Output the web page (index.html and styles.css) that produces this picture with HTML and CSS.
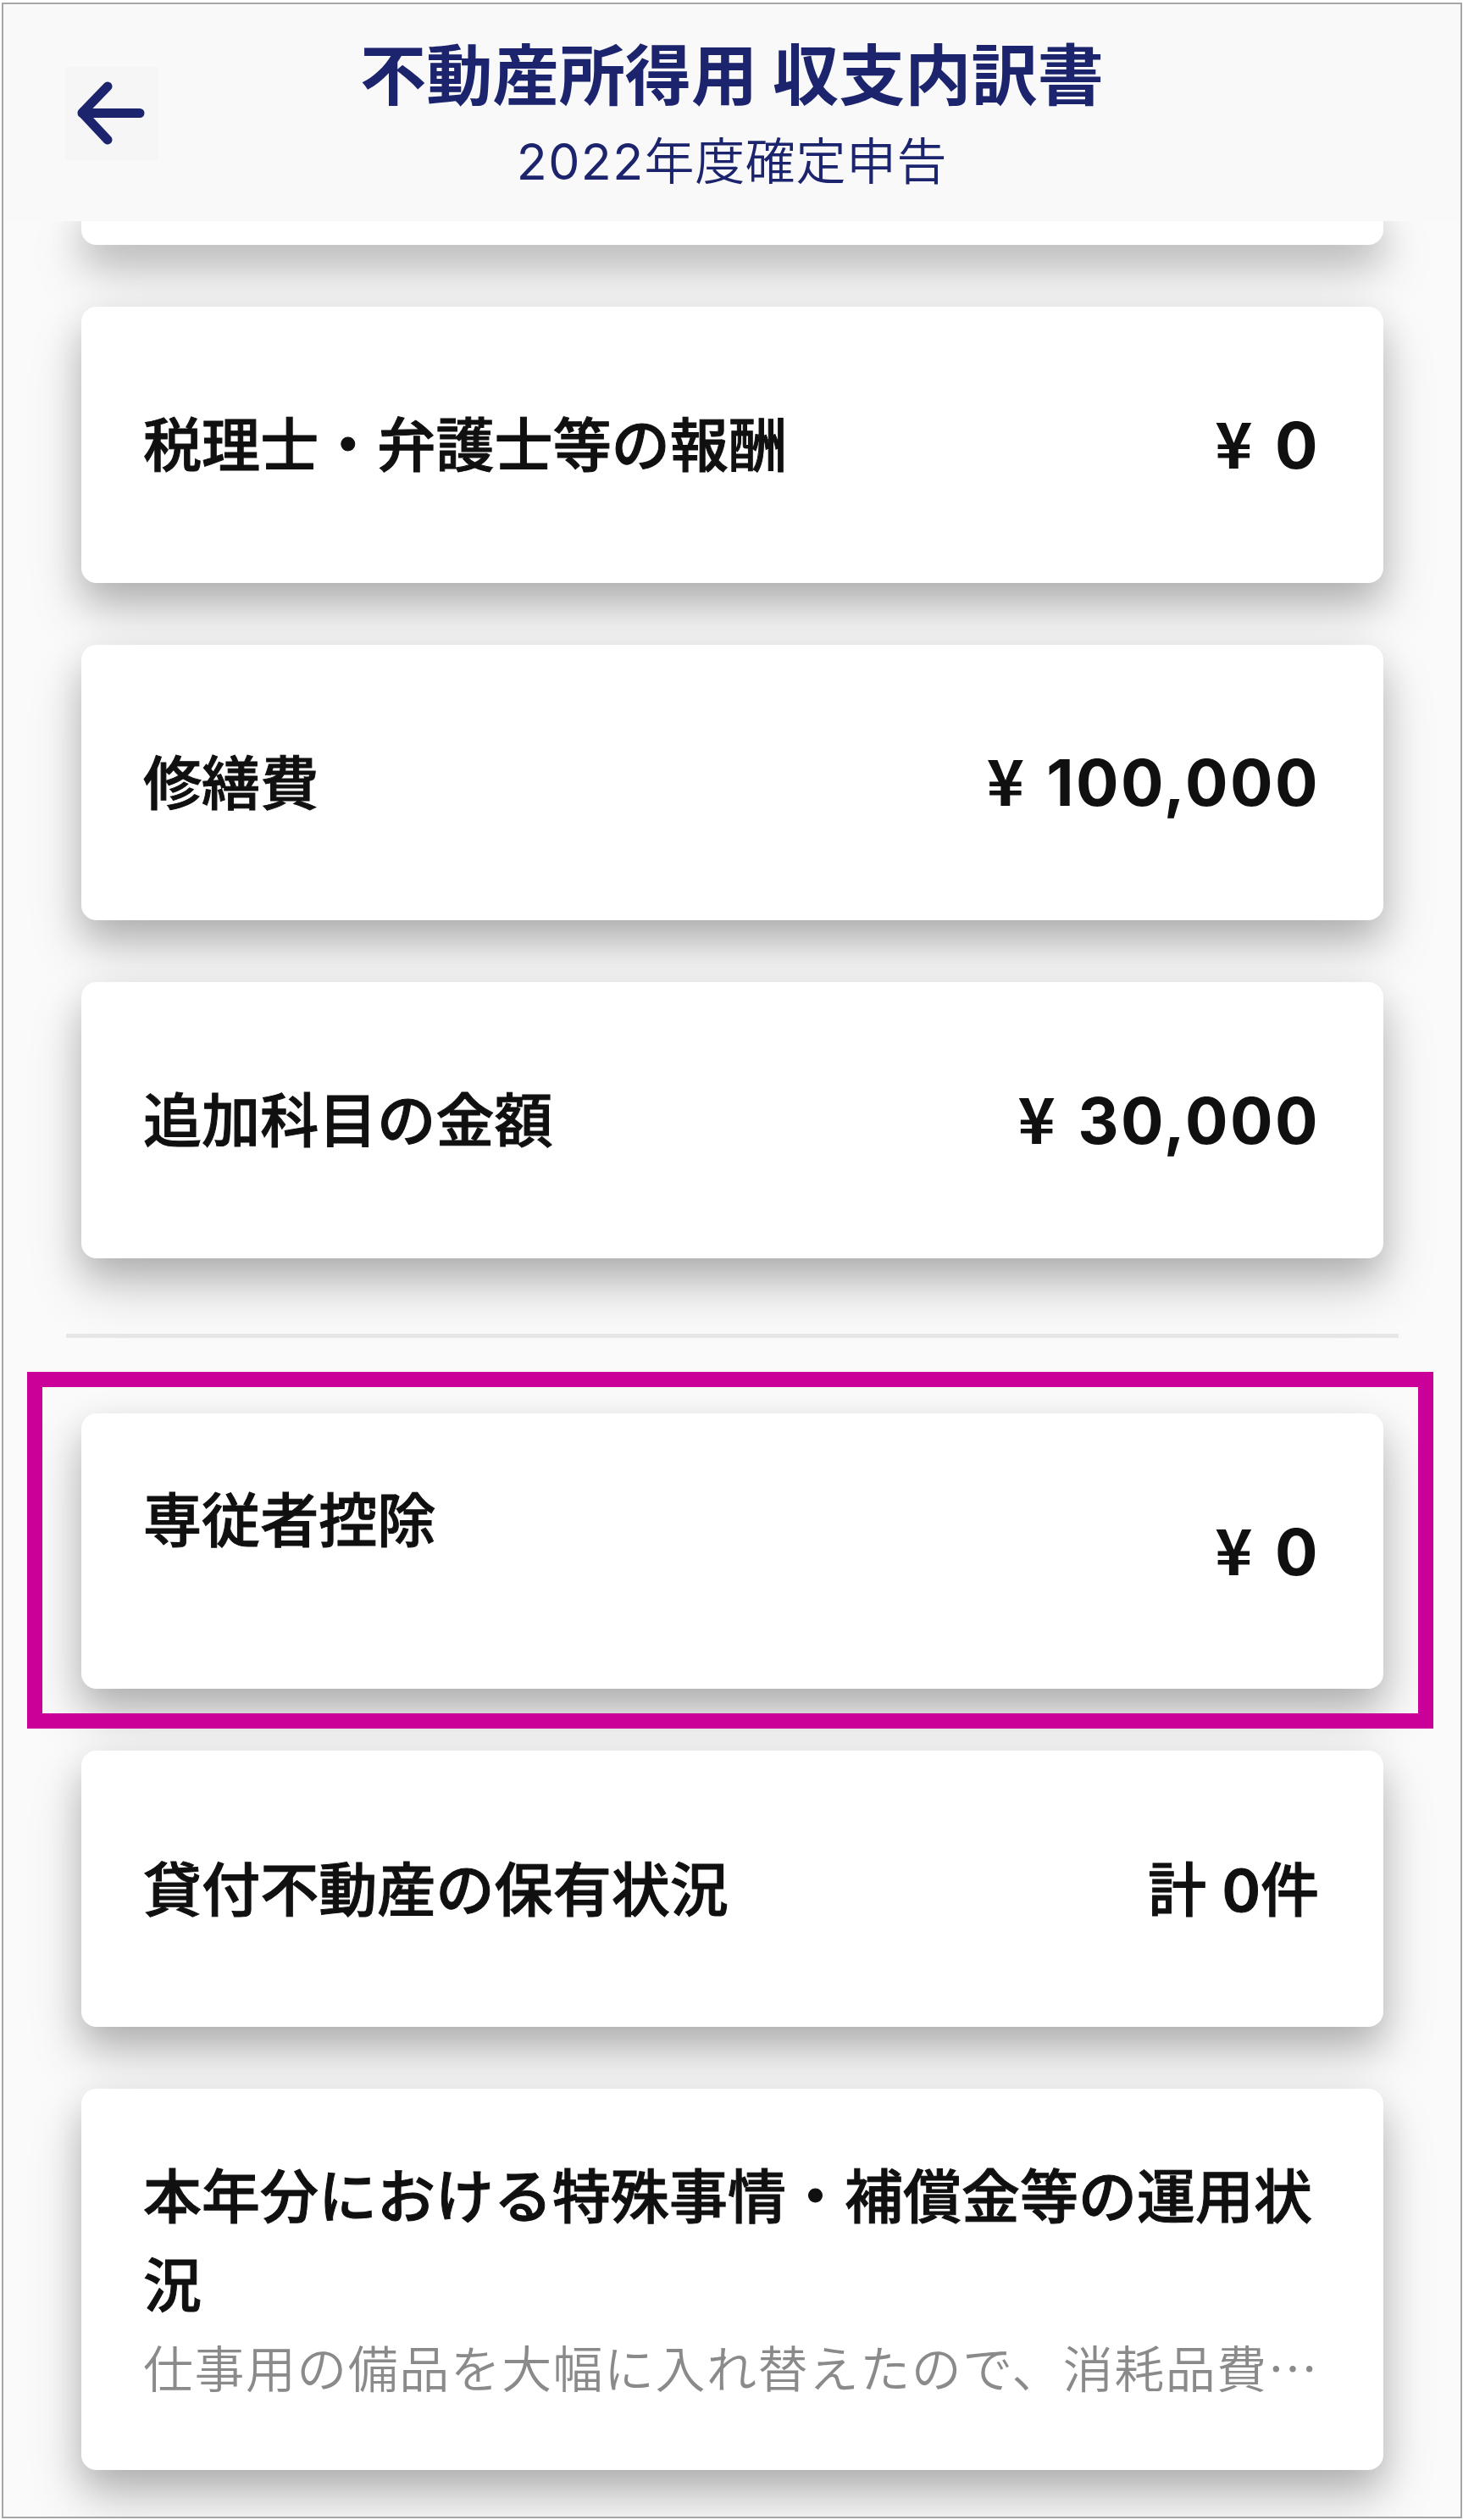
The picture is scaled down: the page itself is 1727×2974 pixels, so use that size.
FILE: index.html
```html
<!DOCTYPE html>
<html lang="ja">
<head>
<meta charset="utf-8">
<title>不動産所得用 収支内訳書</title>
<link rel="stylesheet" href="styles.css">
</head>
<body>
<div class="screen">
  <header class="header">
    <button class="back" aria-label="戻る">
      <svg class="back-icon" viewBox="0 0 110 110"><path d="M50 23 L20 54 L50 86 M20 54.500 H88" /></svg>
    </button>
    <div class="heading">
      <h1 class="title">不動産所得用 収支内訳書</h1>
      <p class="subtitle"><span class="year">2022</span>年度確定申告</p>
    </div>
  </header>
  <main class="list">
    <section class="card card-cut"></section>
    <section class="card"><h2 class="label">税理士・弁護士等の報酬</h2><p class="amount"><span class="yen">¥</span>0</p></section>
    <section class="card"><h2 class="label">修繕費</h2><p class="amount"><span class="yen">¥</span>100,000</p></section>
    <section class="card"><h2 class="label">追加科目の金額</h2><p class="amount"><span class="yen">¥</span>30,000</p></section>
    <hr class="divider">
    <section class="card card-marked"><h2 class="label label-raised">専従者控除</h2><p class="amount"><span class="yen">¥</span>0</p><div class="marker"></div></section>
    <section class="card"><h2 class="label">貸付不動産の保有状況</h2><p class="count">計 <span class="digit">0</span>件</p></section>
    <section class="card card-note"><h2 class="label label-wrap">本年分における特殊事情・補償金等の運用状況</h2><p class="note">仕事用の備品を大幅に入れ替えたので、消耗品費<span class="dots">…</span></p></section>
  </main>
</div>
</body>
</html>
```
FILE: styles.css
```css
* { box-sizing: border-box; margin: 0; padding: 0; }
body { background: #fff; font-family: "Noto Sans CJK JP", sans-serif; color: #101010; }
.screen { width: 1724px; height: 2969px; margin: 3px 0 0 2px; border: 2px solid #a5a6a8; background: #fafafa; overflow: hidden; }
.header { position: relative; z-index: 2; display: flex; height: 256px; padding: 74px 73px 0; background: #f9f9f9; }
.back { flex: none; width: 110px; height: 110px; border: 0; background: #f6f6f6; }
.back-icon { display: block; width: 110px; height: 110px; fill: none; stroke: #1b246d; stroke-width: 11; stroke-linecap: round; stroke-linejoin: round; }
.heading { flex: 1; margin: -51px 110px 0 0; text-align: center; color: #1b246d; white-space: nowrap; }
.title { font-size: 78.200px; line-height: 112px; font-weight: 700; }
.subtitle { font-size: 59px; line-height: 94px; font-weight: 350; letter-spacing: .6px; }
.year { font-family: Inter, sans-serif; font-weight: 400; letter-spacing: 1.400px; }
.list { display: flex; flex-direction: column; gap: 73px; padding: 0 91px 0 92px; }
.card { position: relative; display: flex; align-items: center; justify-content: space-between; flex: none; height: 325.600px; padding: 0 76px 0 73px; border-radius: 18px; background: #fff; box-shadow: 0 34px 64px rgba(0,0,0,.18), 0 18px 40px rgba(0,0,0,.16); }
.card-cut { height: 50px; margin-top: -22px; }
.label { padding-bottom: 6px; font-size: 69.100px; line-height: 105px; font-weight: 500; white-space: nowrap; -webkit-text-stroke: 1px currentColor; }
.label-raised { padding-bottom: 80px; }
.label-wrap { padding-bottom: 0; font-size: 69px; white-space: normal; }
.amount { margin-right: -1px; font-family: Inter, sans-serif; font-size: 75px; line-height: 100px; padding-bottom: 3px; font-weight: 700; letter-spacing: 2.400px; white-space: nowrap; }
.yen { margin-right: 24px; font-family: "Noto Sans CJK JP", sans-serif; font-weight: 700; }
.count { padding-bottom: 1px; font-size: 69px; line-height: 105px; font-weight: 500; word-spacing: 3px; -webkit-text-stroke: 1px currentColor; }
.digit { font-family: Inter, sans-serif; font-weight: 600; }
.divider { flex: none; height: 5px; margin: 16px -18px; border: 0; background: #e7e7e7; }
.marker { position: absolute; left: -64px; top: -49px; width: 1660px; height: 421px; border: 18px solid #cb0099; z-index: 1; }
.card-note { flex-direction: column; align-items: flex-start; justify-content: flex-start; height: 450px; padding-top: 71px; padding-right: 70px; }
.note { font-size: 59px; line-height: 94px; letter-spacing: 1.450px; font-weight: 350; color: #8a8a8a; white-space: nowrap; }
```
